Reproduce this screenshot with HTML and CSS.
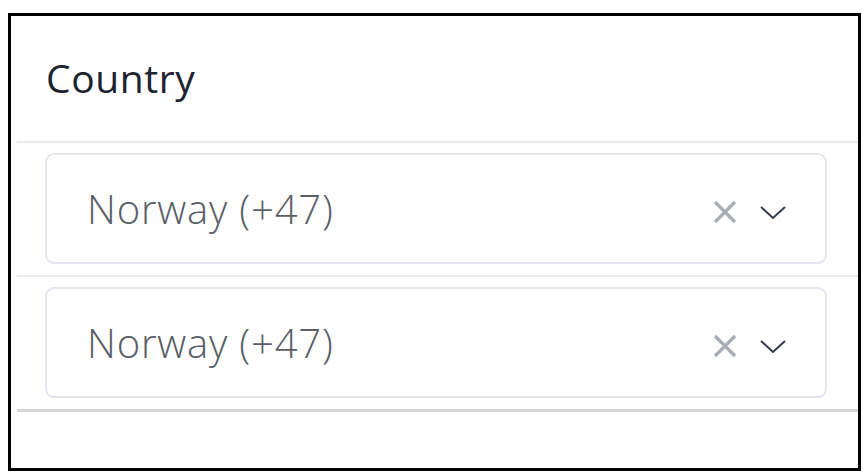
FILE: index.html
```html
<!DOCTYPE html>
<html>
<head>
<meta charset="utf-8">
<link rel="stylesheet" href="styles.css">
</head>
<body>
<div class="frame">
  <div class="table">
    <div class="head">Country</div>
    <div class="row">
      <div class="select">
        <span class="value">Norway (+47)</span>
        <span class="icons">
          <svg class="clear" width="24" height="24" viewBox="0 0 24 24"><path d="M2 2 L22 22 M22 2 L2 22" stroke="#a8adb5" stroke-width="3.2" fill="none"/></svg>
          <svg class="chev" width="28" height="16" viewBox="0 0 28 16"><path d="M2 3 L14 14 L26 3" stroke="#343a4a" stroke-width="2" fill="none"/></svg>
        </span>
      </div>
    </div>
    <div class="row last">
      <div class="select">
        <span class="value">Norway (+47)</span>
        <span class="icons">
          <svg class="clear" width="24" height="24" viewBox="0 0 24 24"><path d="M2 2 L22 22 M22 2 L2 22" stroke="#a8adb5" stroke-width="3.2" fill="none"/></svg>
          <svg class="chev" width="28" height="16" viewBox="0 0 28 16"><path d="M2 3 L14 14 L26 3" stroke="#343a4a" stroke-width="2" fill="none"/></svg>
        </span>
      </div>
    </div>
  </div>
</div>
</body>
</html>
```

FILE: styles.css
```css
html, body {
  margin: 0;
  padding: 0;
  background: #ffffff;
}
body {
  padding: 13px 7px 4px 8px;
  font-family: "Open Sans", "Noto Sans", sans-serif;
}
.frame {
  box-sizing: border-box;
  width: 853px;
  height: 458px;
  border: 3px solid #000000;
  background: #ffffff;
}
.table {
  margin-left: 6px;
}
.head {
  box-sizing: border-box;
  height: 127px;
  padding-left: 29px;
  padding-bottom: 3px;
  display: flex;
  align-items: center;
  font-size: 39px;
  letter-spacing: 0.6px;
  font-weight: 500;
  color: #1e2330;
  border-bottom: 2px solid #e8eaef;
}
.row {
  box-sizing: border-box;
  height: 134px;
  padding: 10px 31px 10px 28px;
  border-bottom: 2px solid #e8eaef;
}
.row.last {
  border-bottom: 3px solid #d6d6d6;
  height: 135px;
}
.select {
  box-sizing: border-box;
  height: 111px;
  border: 2px solid #e3e6ee;
  border-radius: 9px;
  display: flex;
  align-items: center;
  justify-content: space-between;
  padding: 0 38px 0 40px;
}
.value {
  font-size: 40px;
  font-weight: 300;
  letter-spacing: 0.8px;
  color: #5a5e66;
}
.icons {
  display: flex;
  align-items: center;
  gap: 22px;
  margin-top: 6px;
}
.clear {
  display: block;
}
.chev {
  display: block;
}
```
